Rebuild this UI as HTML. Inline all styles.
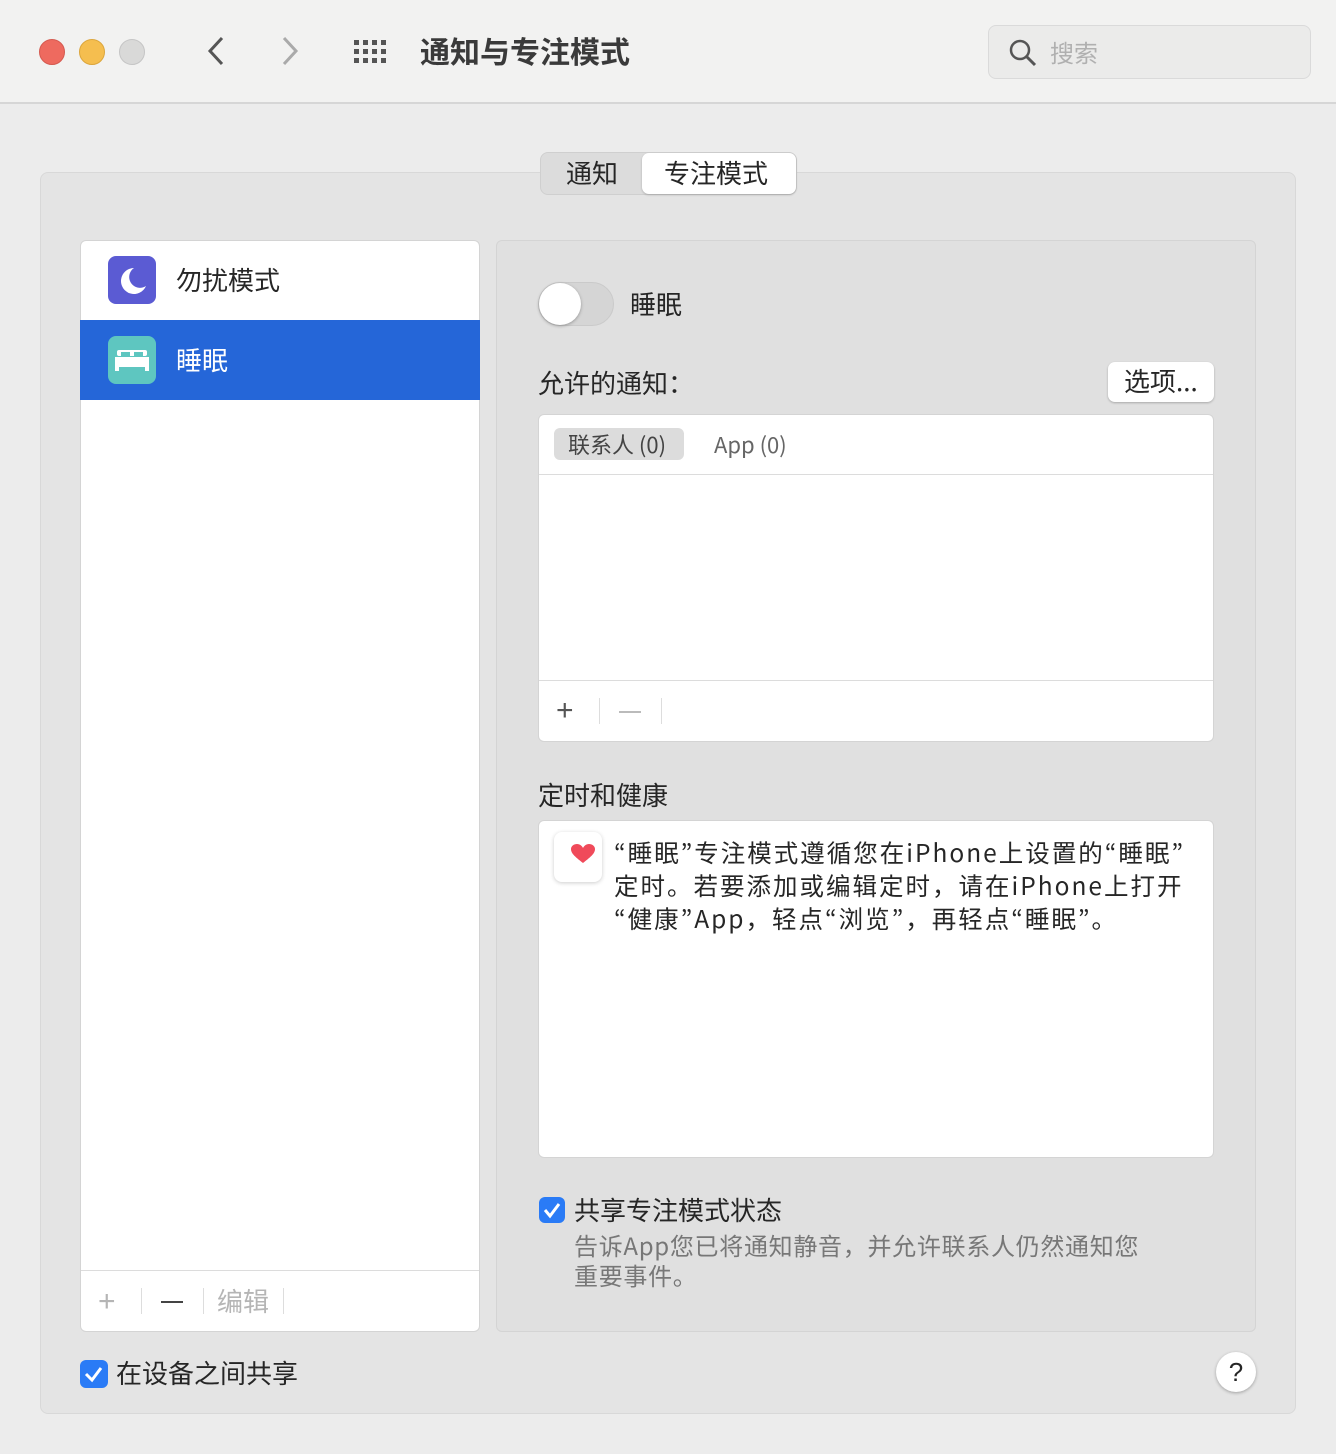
<!DOCTYPE html>
<html><head><meta charset="utf-8"><style>
*{box-sizing:border-box;margin:0;padding:0}
body{width:1336px;height:1454px;background:#ececec;font-family:"Liberation Sans","Noto Sans CJK SC",sans-serif;position:relative;overflow:hidden;color:#262626}
.a{position:absolute}
.tb{left:0;top:0;width:1336px;height:104px;background:#f2f2f1;border-bottom:2px solid #d6d6d6}
.dot{width:26px;height:26px;border-radius:50%;top:39px}
.box{left:40px;top:172px;width:1256px;height:1242px;background:#e4e4e4;border:1px solid #d8d8d8;border-radius:8px}
.white{background:#fff;border:1px solid #d4d4d4;border-radius:6px}
.t{font-size:26px;white-space:nowrap;font-family:"Noto Sans CJK SC",sans-serif;line-height:34px}
.cj{font-family:"Noto Sans CJK SC",sans-serif}
</style></head><body>
<div class="a tb"></div>
<div class="a dot" style="left:39px;background:#ee6a5f;border:1px solid #d55a50"></div>
<div class="a dot" style="left:79px;background:#f5be4f;border:1px solid #dca63c"></div>
<div class="a dot" style="left:119px;background:#d9d9d8;border:1px solid #c5c5c5"></div>
<svg class="a" style="left:200px;top:34px" width="30" height="34"><path d="M22 4 L10 17 L22 30" fill="none" stroke="#555" stroke-width="3"/></svg>
<svg class="a" style="left:276px;top:34px" width="30" height="34"><path d="M8 4 L20 17 L8 30" fill="none" stroke="#aaa" stroke-width="3"/></svg>
<svg class="a" style="left:352px;top:38px" width="40" height="28" fill="#555">
<g><rect x="2" y="2" width="5" height="5"/><rect x="11" y="2" width="5" height="5"/><rect x="20" y="2" width="5" height="5"/><rect x="29" y="2" width="5" height="5"/>
<rect x="2" y="11" width="5" height="5"/><rect x="11" y="11" width="5" height="5"/><rect x="20" y="11" width="5" height="5"/><rect x="29" y="11" width="5" height="5"/>
<rect x="2" y="20" width="5" height="5"/><rect x="11" y="20" width="5" height="5"/><rect x="20" y="20" width="5" height="5"/><rect x="29" y="20" width="5" height="5"/></g></svg>
<div class="a cj" style="left:420px;top:30px;font-size:30px;line-height:40px;font-weight:bold;color:#3a3a3a">通知与专注模式</div>
<div class="a" style="left:988px;top:25px;width:323px;height:54px;background:#ebebea;border:1px solid #dadada;border-radius:8px"></div>
<svg class="a" style="left:1008px;top:38px" width="30" height="30"><circle cx="12" cy="12" r="9" fill="none" stroke="#555" stroke-width="2.5"/><path d="M19 19 L27 27" stroke="#555" stroke-width="3"/></svg>
<div class="a cj" style="left:1050px;top:35px;font-size:24px;line-height:34px;color:#b0b0b0">搜索</div>

<div class="a box"></div>
<div class="a" style="left:540px;top:152px;width:257px;height:43px;background:#dcdcdc;border:1px solid #cfcfcf;border-radius:8px"></div>
<div class="a t" style="left:566px;top:156px">通知</div>
<div class="a" style="left:642px;top:153px;width:154px;height:41px;background:#fff;border-radius:7px;box-shadow:0 1px 2px rgba(0,0,0,.2)"></div>
<div class="a t" style="left:664px;top:156px">专注模式</div>

<div class="a white" style="left:80px;top:240px;width:400px;height:1092px"></div>
<div class="a" style="left:108px;top:256px;width:48px;height:48px;background:#5b5bd3;border-radius:8px"></div>
<svg class="a" style="left:108px;top:256px" width="48" height="48"><path d="M26 12 A13 13 0 1 0 38 30 A10 10 0 0 1 26 12Z" fill="#fff"/></svg>
<div class="a t" style="left:176px;top:263px">勿扰模式</div>
<div class="a" style="left:80px;top:320px;width:400px;height:80px;background:#2566d8"></div>
<div class="a" style="left:108px;top:336px;width:48px;height:48px;background:#5ec6c0;border-radius:8px"></div>
<svg class="a" style="left:108px;top:336px" width="48" height="48" fill="#fff"><rect x="9" y="14" width="30" height="6" rx="2"/><rect x="7" y="21" width="34" height="10"/><rect x="7" y="30" width="4" height="5"/><rect x="37" y="30" width="4" height="5"/><rect x="13" y="16" width="9" height="4" fill="#5ec6c0"/><rect x="26" y="16" width="9" height="4" fill="#5ec6c0"/></svg>
<div class="a t" style="left:176px;top:343px;color:#fff">睡眠</div>
<div class="a" style="left:81px;top:1270px;width:398px;height:1px;background:#dcdcdc"></div>
<div class="a" style="left:98px;top:1285px;font-size:30px;color:#b5b5b5">+</div>
<div class="a" style="left:141px;top:1288px;width:1px;height:26px;background:#ddd"></div>
<div class="a" style="left:161px;top:1301px;width:22px;height:2px;background:#444"></div>
<div class="a" style="left:203px;top:1288px;width:1px;height:26px;background:#ddd"></div>
<div class="a t" style="left:217px;top:1284px;color:#b5b5b5">编辑</div>
<div class="a" style="left:283px;top:1288px;width:1px;height:26px;background:#ddd"></div>

<div class="a" style="left:496px;top:240px;width:760px;height:1092px;background:#e0e0e0;border:1px solid #d4d4d4;border-radius:6px"></div>
<div class="a" style="left:538px;top:282px;width:76px;height:44px;background:#d5d5d5;border-radius:22px;border:1px solid #cacaca"></div>
<div class="a" style="left:539px;top:283px;width:42px;height:42px;background:#fff;border-radius:50%;box-shadow:0 1px 3px rgba(0,0,0,.3)"></div>
<div class="a t" style="left:630px;top:287px">睡眠</div>
<div class="a t" style="left:538px;top:366px">允许的通知：</div>
<div class="a" style="left:1108px;top:362px;width:106px;height:40px;background:#fff;border-radius:7px;box-shadow:0 1px 2px rgba(0,0,0,.25)"></div>
<div class="a t" style="left:1124px;top:364px">选项...</div>
<div class="a white" style="left:538px;top:414px;width:676px;height:328px"></div>
<div class="a" style="left:554px;top:428px;width:130px;height:32px;background:#dcdcdc;border-radius:6px"></div>
<div class="a cj" style="left:568px;top:429px;font-size:22px;line-height:30px;color:#444">联系人 (0)</div>
<div class="a cj" style="left:714px;top:429px;font-size:22px;line-height:30px;color:#666">App (0)</div>
<div class="a" style="left:539px;top:474px;width:674px;height:1px;background:#dcdcdc"></div>
<div class="a" style="left:539px;top:680px;width:674px;height:1px;background:#dcdcdc"></div>
<div class="a" style="left:556px;top:694px;font-size:30px;color:#555">+</div>
<div class="a" style="left:599px;top:698px;width:1px;height:26px;background:#ddd"></div>
<div class="a" style="left:619px;top:711px;width:22px;height:2px;background:#bbb"></div>
<div class="a" style="left:661px;top:698px;width:1px;height:26px;background:#ddd"></div>
<div class="a t" style="left:538px;top:778px">定时和健康</div>
<div class="a white" style="left:538px;top:820px;width:676px;height:338px"></div>
<div class="a" style="left:554px;top:832px;width:48px;height:50px;background:#fff;border-radius:8px;box-shadow:0 1px 4px rgba(0,0,0,.2)"></div>
<svg class="a" style="left:570px;top:843px" width="26" height="22"><path d="M13 20 C4 13 1 10 1 6 C1 3 4 1 7 1 C10 1 12 3 13 5 C14 3 16 1 19 1 C22 1 25 3 25 6 C25 10 22 13 13 20Z" fill="#f04a5a"/></svg>
<div class="a" style="left:614px;top:836px;font-size:24.5px;line-height:33px;letter-spacing:2px;width:600px;white-space:nowrap;font-family:'Noto Sans CJK JP',sans-serif">“睡眠”专注模式遵循您在iPhone上设置的“睡眠”<br>定时。若要添加或编辑定时，请在iPhone上打开<br>“健康”App，轻点“浏览”，再轻点“睡眠”。</div>
<div class="a" style="left:539px;top:1197px;width:26px;height:26px;background:#2a7bf6;border-radius:6px"></div>
<svg class="a" style="left:539px;top:1197px" width="26" height="26"><path d="M6 13 L11 19 L20 7" fill="none" stroke="#fff" stroke-width="3"/></svg>
<div class="a t" style="left:574px;top:1193px">共享专注模式状态</div>
<div class="a cj" style="left:574px;top:1230px;font-size:24px;line-height:30px;letter-spacing:0.7px;color:#777;width:620px;white-space:nowrap">告诉App您已将通知静音，并允许联系人仍然通知您<br>重要事件。</div>

<div class="a" style="left:80px;top:1360px;width:28px;height:28px;background:#2a7bf6;border-radius:6px"></div>
<svg class="a" style="left:80px;top:1360px" width="28" height="28"><path d="M6 14 L12 20 L21 8" fill="none" stroke="#fff" stroke-width="3"/></svg>
<div class="a t" style="left:116px;top:1356px">在设备之间共享</div>
<div class="a" style="left:1216px;top:1352px;width:40px;height:40px;background:#fff;border-radius:50%;box-shadow:0 1px 3px rgba(0,0,0,.3);font-size:26px;text-align:center;line-height:40px">?</div>
</body></html>
